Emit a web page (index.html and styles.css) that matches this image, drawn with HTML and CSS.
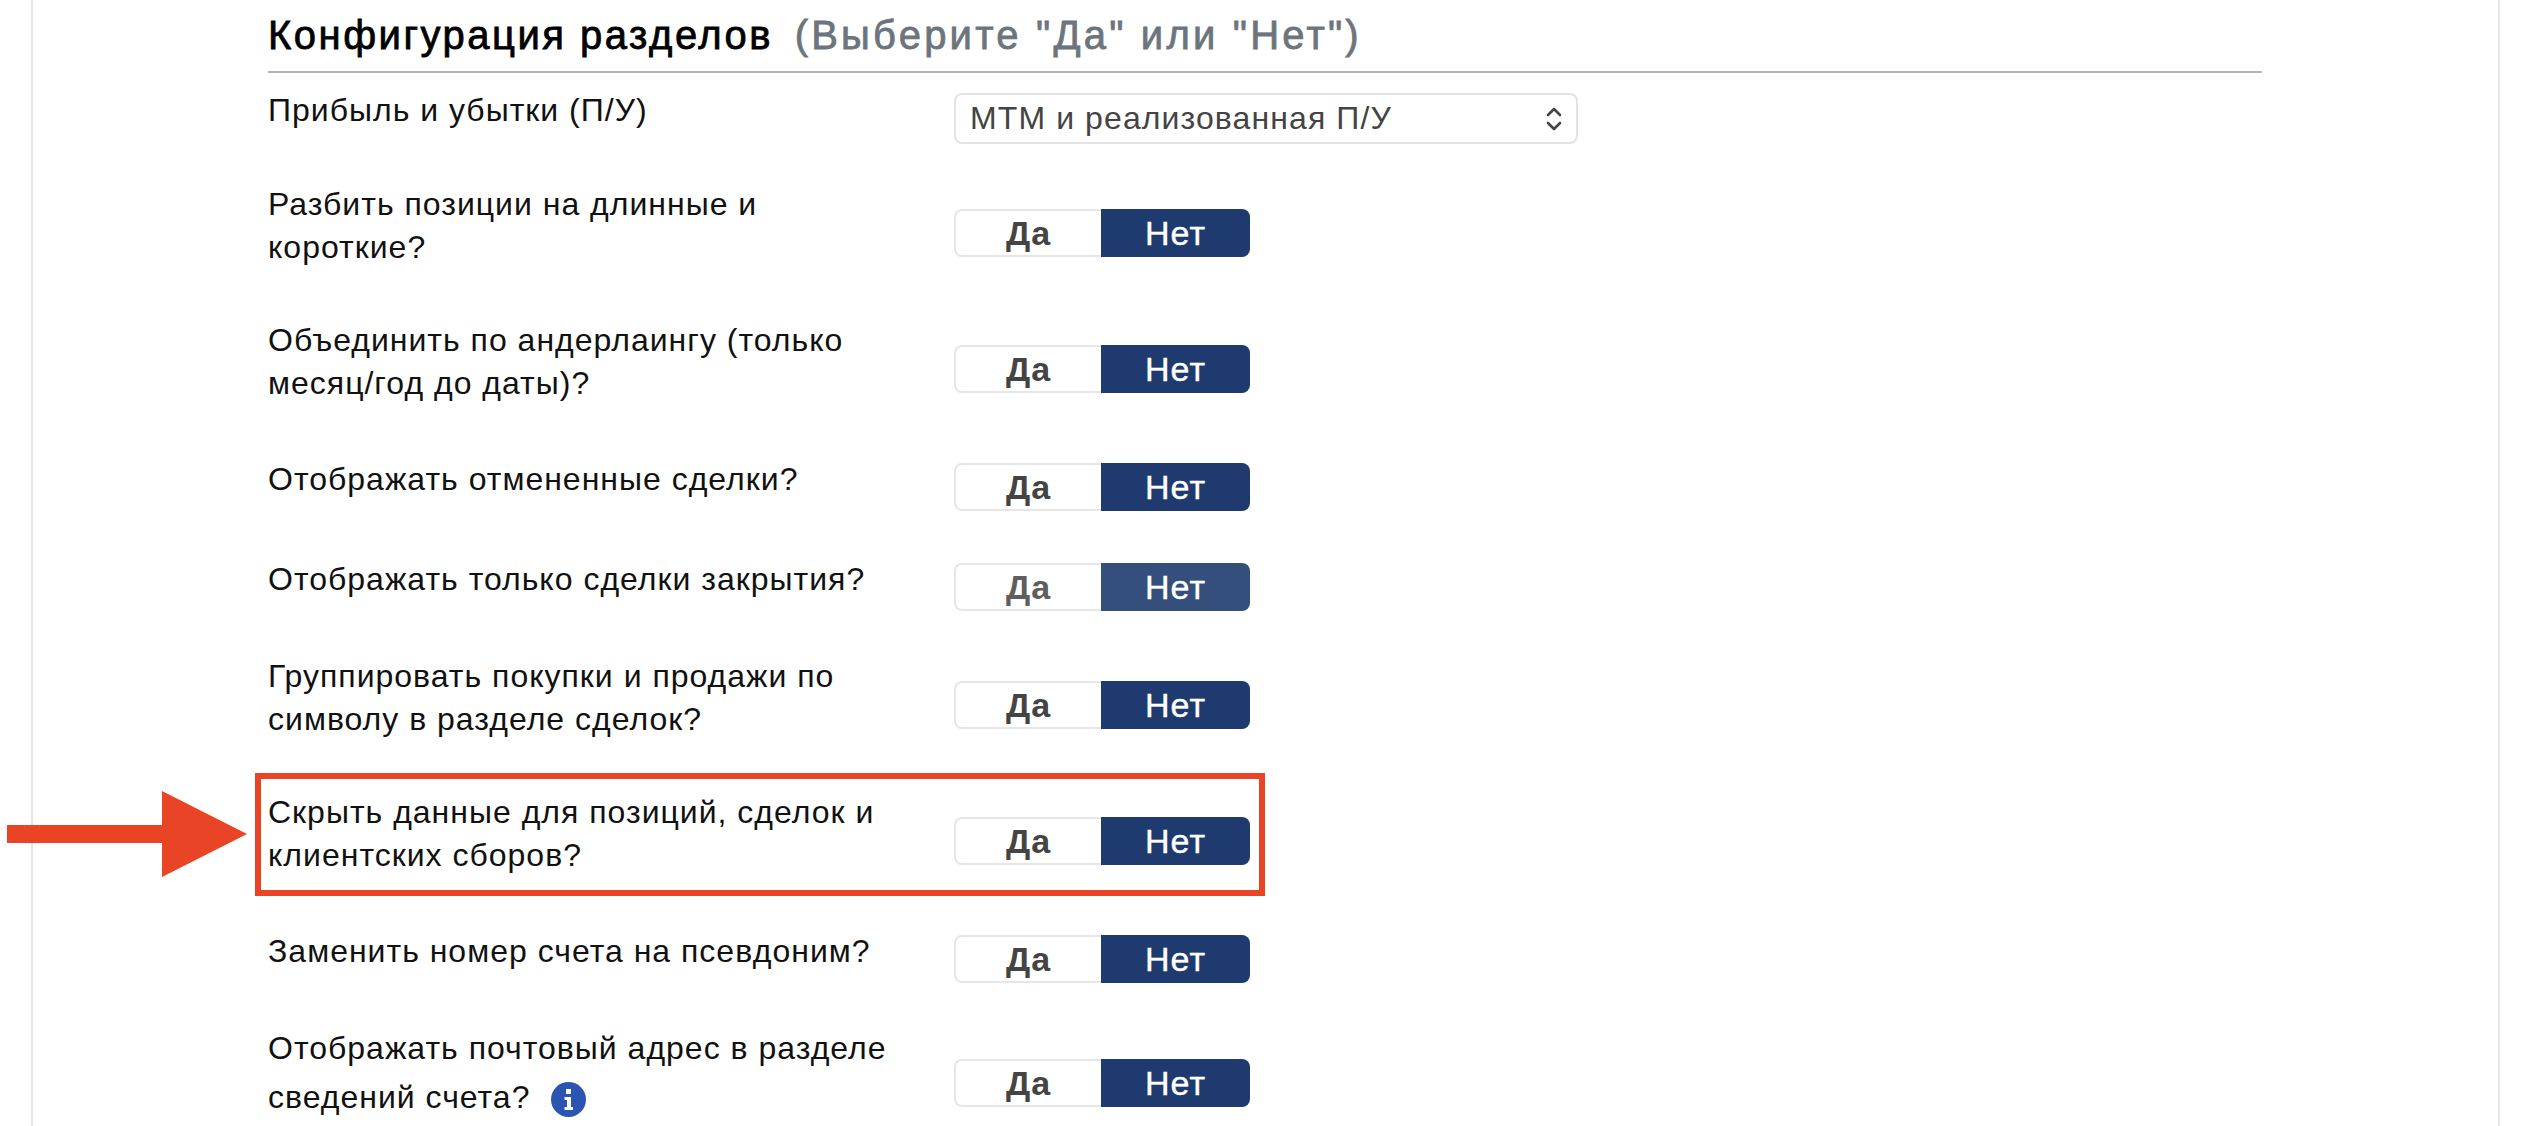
FILE: index.html
```html
<!DOCTYPE html>
<html lang="ru">
<head>
    <meta charset="UTF-8">
    <meta name="viewport" content="width=device-width, initial-scale=1.0">
    <title>Конфигурация разделов</title>
    <link rel="stylesheet" href="styles.css">
</head>
<body>
    <div class="panel">
        <h2 class="titulo">Конфигурация разделов <span class="dica">(Выберите "Да" или "Нет")</span></h2>

        <div class="linha linha-select linha-simples">
            <div class="rotulo">Прибыль и убытки (П/У)</div>
            <div class="select">
                <span>МТМ и реализованная П/У</span>
                <svg class="chevrons" width="16" height="26" viewBox="0 0 16 26" fill="none" stroke="#444" stroke-width="2.6" stroke-linecap="round" stroke-linejoin="round"><path d="M2 9 8 3l6 6"/><path d="M2 17l6 6 6-6"/></svg>
            </div>
        </div>

        <div class="linha">
            <div class="rotulo">Разбить позиции на длинные и короткие?</div>
            <div class="toggle"><span class="sim">Да</span><span class="nao">Нет</span></div>
        </div>

        <div class="linha">
            <div class="rotulo">Объединить по андерлаингу (только месяц/год до даты)?</div>
            <div class="toggle"><span class="sim">Да</span><span class="nao">Нет</span></div>
        </div>

        <div class="linha linha-simples">
            <div class="rotulo">Отображать отмененные сделки?</div>
            <div class="toggle"><span class="sim">Да</span><span class="nao">Нет</span></div>
        </div>

        <div class="linha linha-simples">
            <div class="rotulo">Отображать только сделки закрытия?</div>
            <div class="toggle toggle-hover"><span class="sim">Да</span><span class="nao">Нет</span></div>
        </div>

        <div class="linha">
            <div class="rotulo">Группировать покупки и продажи по символу в разделе сделок?</div>
            <div class="toggle"><span class="sim">Да</span><span class="nao">Нет</span></div>
        </div>

        <div class="linha linha-destaque">
            <div class="moldura"></div>
            <svg class="seta" width="240" height="86" viewBox="0 0 240 86"><path fill="#e94425" d="M0 34h155V0l85 43-85 43V52H0z"/></svg>
            <div class="rotulo">Скрыть данные для позиций, сделок и клиентских сборов?</div>
            <div class="toggle"><span class="sim">Да</span><span class="nao">Нет</span></div>
        </div>

        <div class="linha linha-simples">
            <div class="rotulo">Заменить номер счета на псевдоним?</div>
            <div class="toggle"><span class="sim">Да</span><span class="nao">Нет</span></div>
        </div>

        <div class="linha linha-info">
            <div class="rotulo">Отображать почтовый адрес в разделе сведений счета? <svg class="info" width="35" height="35" viewBox="0 0 35 35"><circle cx="17.5" cy="17.5" r="17.5" fill="#2a55b0"/><path fill="#fff" d="M15 7h5v5h-5zM13.500 15H20v10h2v3h-8.500v-3H16v-7h-2.500z"/></svg></div>
            <div class="toggle"><span class="sim">Да</span><span class="nao">Нет</span></div>
        </div>
    </div>
</body>
</html>
```
FILE: styles.css
```css
html, body { height: 100%; }
body { margin: 0; background: #fff; font-family: "Liberation Sans", Arial, sans-serif; color: #111; overflow: hidden; }
.panel { box-sizing: border-box; height: 100%; margin: 0 30px 0 31px; padding: 0 236px 0 235px; border-left: 2px solid #e6e6e6; border-right: 2px solid #e6e6e6; }
.titulo { margin: 0 0 20px; height: 71px; line-height: 71px; font-size: 40px; font-weight: 400; letter-spacing: 2.5px; -webkit-text-stroke: 0.8px; color: #000; border-bottom: 2px solid #b3b3b3; white-space: nowrap; }
.dica { margin-left: 8px; color: #6c757d; letter-spacing: 3.2px; }
.linha { display: flex; align-items: center; position: relative; min-height: 50px; margin-bottom: 50px; }
.linha-select { margin-bottom: 46px; }
.rotulo { box-sizing: border-box; flex: 0 0 686px; align-self: flex-start; margin-top: -7px; padding-right: 46px; padding-bottom: 7px; font-size: 32px; line-height: 43px; letter-spacing: 1px; }
.linha-simples .rotulo { margin-top: -4px; padding-bottom: 4px; }
.select { box-sizing: border-box; display: flex; align-items: center; justify-content: space-between; width: 624px; height: 51px; padding: 0 14px 0 14px; border: 2px solid #e3e3e3; border-radius: 8px; font-size: 32px; letter-spacing: 1.1px; color: #444; }
.toggle { display: flex; width: 296px; height: 48px; font-size: 34px; letter-spacing: 1px; line-height: 48px; text-align: center; }
.sim { box-sizing: border-box; width: 147px; border: 2px solid #e6e6e6; border-right: 0; border-radius: 8px 0 0 8px; line-height: 44px; font-weight: 700; color: #444; }
.nao { width: 149px; background: #1e3a6e; border-radius: 0 8px 8px 0; color: #fff; -webkit-text-stroke: 0.4px; }
.toggle-hover .sim { color: #5e5e5e; }
.toggle-hover .nao { background: #344f7c; }
.moldura { position: absolute; left: -13px; top: -25px; width: 1010px; height: 123px; box-sizing: border-box; border: 6px solid #e94425; }
.seta { position: absolute; left: -261px; top: -7px; }
.linha-info .rotulo { padding-bottom: 2px; }
.info { vertical-align: middle; margin: 12px 0 12px 11px; }
```
